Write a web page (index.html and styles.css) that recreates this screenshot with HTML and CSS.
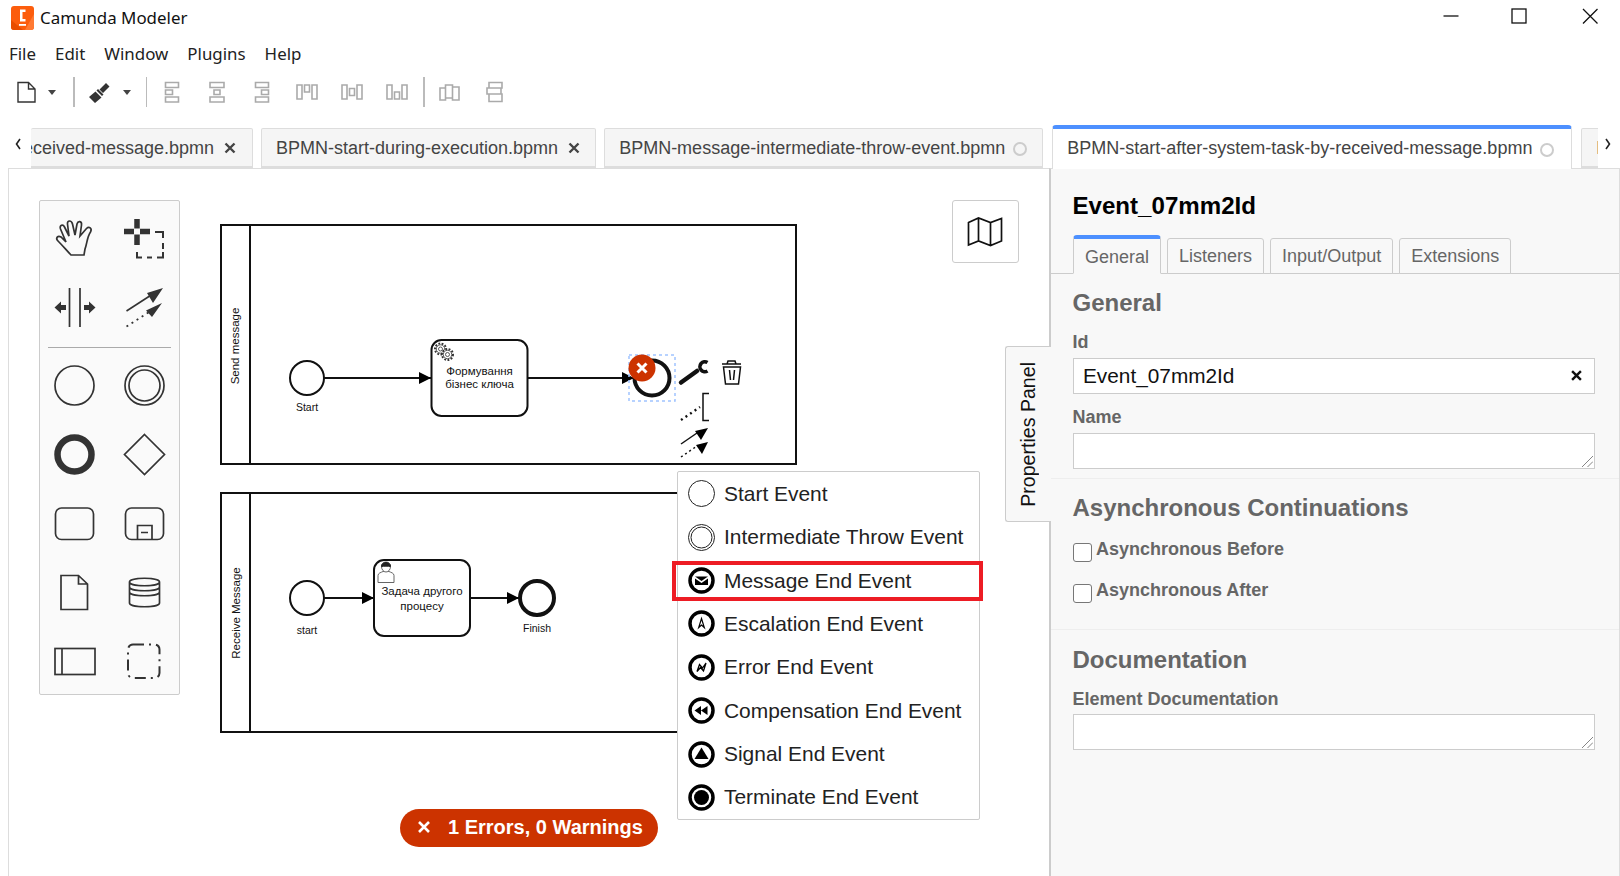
FILE: index.html
```html
<!DOCTYPE html>
<html lang="en">
<head>
<meta charset="utf-8">
<title>Camunda Modeler</title>
<link rel="stylesheet" href="styles.css">
</head>
<body>
<header class="titlebar">
  <div class="title-left">
    <svg class="logo" viewBox="0 0 23 24"><rect width="23" height="24" rx="3" fill="#fc5d0d"/><path d="M0 14 12 24H3a3 3 0 0 1-3-3z" fill="#e84d00"/><path d="M23 8 14 24h6a3 3 0 0 0 3-3z" fill="#ff7a33"/><path d="M9 3.500h5.500v2.500h-3v7h3v2.500H9z" fill="#fff"/><rect x="8" y="18" width="7" height="1.800" fill="#fff"/></svg>
    <span class="app-title">Camunda Modeler</span>
  </div>
  <div class="win-controls">
    <svg class="win-icon" viewBox="0 0 16 16"><path d="M0.500 8h15" class="win-line"/></svg>
    <svg class="win-icon" viewBox="0 0 16 16"><rect x="1" y="1" width="14" height="14" class="win-line"/></svg>
    <svg class="win-icon win-close" viewBox="0 0 16 16"><path d="M1 1l14.500 14.500M15.500 1 1 15.500" class="win-line"/></svg>
  </div>
</header>
<nav class="menubar">
  <span>File</span><span>Edit</span><span>Window</span><span>Plugins</span><span>Help</span>
</nav>
<div class="toolbar">
  <svg class="tool tool-first" viewBox="0 0 24 24"><path d="M4 2.500h10.500L21 9v13H4z M14.500 2.500V9H21" class="tool-dark"/></svg>
  <span class="caret caret-a"></span>
  <span class="sep sep-a"></span>
  <svg class="tool tool-brush" viewBox="0 0 24 24"><path d="M19 3 22.500 6.500 16 13 12.500 9.500zM11 9 16.500 14.500 15 16 9.500 10.500zM8.500 11.500 14.500 17.500 8 23 2 17z" fill="#333"/></svg>
  <span class="caret caret-b"></span>
  <span class="sep sep-b"></span>
  <svg class="tool tool-align" viewBox="0 0 24 24"><path d="M5.500 2.500h13v5h-13zM5.500 10h7v4.500h-7zM5.500 17h13v5h-13z" class="tool-off"/></svg>
  <svg class="tool tool-next" viewBox="0 0 24 24"><path d="M5 2.500h14v5H5zM9 10h6v4.500H9zM5 17h14v5H5z" class="tool-off"/></svg>
  <svg class="tool tool-next" viewBox="0 0 24 24"><path d="M5.500 2.500h13v5h-13zM11.500 10h7v4.500h-7zM5.500 17h13v5h-13z" class="tool-off"/></svg>
  <svg class="tool tool-next" viewBox="0 0 24 24"><path d="M2 5h5v14H2zM9.500 5h5v7h-5zM17 5h5v14h-5z" class="tool-off"/></svg>
  <svg class="tool tool-next" viewBox="0 0 24 24"><path d="M2 5h5v14H2zM9.500 8.500h5v7h-5zM17 5h5v14h-5z" class="tool-off"/></svg>
  <svg class="tool tool-next" viewBox="0 0 24 24"><path d="M2 5h5v14H2zM9.500 12h5v7h-5zM17 5h5v14h-5z" class="tool-off"/></svg>
  <span class="sep sep-c"></span>
  <svg class="tool tool-dist" viewBox="0 0 24 24"><path d="M2 8h5.500v12H2zM7.500 5h7v13h-7zM14.500 7H21v13h-6.500z" class="tool-off"/></svg>
  <svg class="tool tool-next" viewBox="0 0 24 24"><path d="M6 2.500h13v5.500H6zM4 8h14v6H4zM6 14h13v7.500H6z" class="tool-off"/></svg>
</div>
<div class="tabrow">
  <svg class="chev chev-l" viewBox="0 0 8 14"><path d="M6 2 2.500 7 6 12"/></svg>
  <div class="tabs">
    <div class="tab tab-clip"><span class="tab-name">BPMN-start-after-system-task-by-received-message.bpmn</span><svg class="tab-x" viewBox="0 0 12 12"><path d="M1.500 1.500l9 9M10.500 1.500l-9 9"/></svg></div>
    <div class="tab"><span class="tab-name">BPMN-start-during-execution.bpmn</span><svg class="tab-x" viewBox="0 0 12 12"><path d="M1.500 1.500l9 9M10.500 1.500l-9 9"/></svg></div>
    <div class="tab"><span class="tab-name">BPMN-message-intermediate-throw-event.bpmn</span><span class="dirty"></span></div>
    <div class="tab tab-active"><span class="tab-name">BPMN-start-after-system-task-by-received-message.bpmn</span><span class="dirty"></span></div>
    <div class="tab"><span class="tab-name">BPMN-start.bpmn</span></div>
  </div>
  <svg class="chev chev-r" viewBox="0 0 8 14"><path d="M2 2 5.500 7 2 12"/></svg>
</div>
<main class="main">
  <section class="canvas">
    <svg class="diagram" viewBox="9 169 1040 707">
      <defs>
        <marker id="arr" viewBox="0 0 12 12" refX="12" refY="6" markerWidth="12" markerHeight="12" markerUnits="userSpaceOnUse" orient="auto"><path d="M0 0 12 6 0 12z" fill="#000"/></marker>
      </defs>
      <!-- pool 1 -->
      <rect x="221" y="225" width="575" height="239" class="d-line"/>
      <path d="M250 225v239" class="d-line"/>
      <text class="d-text d-lane" transform="translate(239 346) rotate(-90)" text-anchor="middle">Send message</text>
      <circle cx="307" cy="378" r="17" class="d-line d-fill"/>
      <text class="d-text" x="307" y="411" text-anchor="middle">Start</text>
      <path d="M324 378H431" class="d-line" marker-end="url(#arr)"/>
      <rect x="431.500" y="340" width="96" height="76" rx="10" class="d-line d-fill"/>
      <g class="gear"><circle cx="440.500" cy="349" r="5.500"/><circle cx="440.500" cy="349" r="4.200"/><circle cx="440.500" cy="349" r="2"/><circle cx="447.500" cy="354.500" r="5.500"/><circle cx="447.500" cy="354.500" r="4.200"/><circle cx="447.500" cy="354.500" r="2"/></g>
      <text class="d-text d-task" x="479.500" y="375" text-anchor="middle">Формування</text>
      <text class="d-text d-task" x="479.500" y="388" text-anchor="middle">бізнес ключа</text>
      <path d="M527.500 378H634" class="d-line" marker-end="url(#arr)"/>
      <rect x="629" y="355" width="46" height="46" class="d-select"/>
      <circle cx="652" cy="378" r="17.500" class="d-end"/>
      <circle cx="642" cy="368" r="13.500" fill="#cc3300"/>
      <path d="M637.500 363.500l9 9M646.500 363.500l-9 9" class="badge-x"/>
      <path d="M681 382.500 697 371" class="wrench"/>
      <path d="M707.500 362.500a5 5 0 1 0 0 8.500" class="wrench-head"/>
      <path d="M722 364h19M727 364l1-3h7l1 3M723.500 367l2 17h13l2-17zM729.500 370l1 10M734.500 370l-1 10" class="trash"/>
      <path d="M681 420 700 407" class="d-dots"/>
      <path d="M709 393.500h-6v27h6" class="d-thin"/>
      <path d="M681 444 697 433" class="d-thin"/><path d="M708 428 695 431 701 440z" fill="#000"/>
      <path d="M681 457 697 446" class="d-dots-thin"/><path d="M708 442 696 445 702 454z" fill="#000"/>
      <!-- pool 2 -->
      <rect x="221" y="493" width="575" height="239" class="d-line"/>
      <path d="M250 493v239" class="d-line"/>
      <text class="d-text d-lane" transform="translate(239.500 613) rotate(-90)" text-anchor="middle">Receive Message</text>
      <circle cx="307" cy="598" r="17" class="d-line d-fill"/>
      <text class="d-text" x="307" y="634" text-anchor="middle">start</text>
      <path d="M324 598H374" class="d-line" marker-end="url(#arr)"/>
      <rect x="374" y="560" width="96" height="76" rx="10" class="d-line d-fill"/>
      <g class="user"><path d="M378 582.500v-7c0-2.500 3-3 5-4h6c2 1 5 1.500 5 4v7z"/><path d="M381.500 566.500a4.500 4.500 0 0 1 9 0c0 3-2 5.500-4.500 5.500s-4.500-2.500-4.500-5.500z"/><path d="M381.500 566.500c0-2.800 2-4 4.500-4s4.500 1.200 4.500 4c-2.500 -.5-6.500-.5-9 0z" class="user-hair"/></g>
      <text class="d-text d-task" x="422" y="595" text-anchor="middle">Задача другого</text>
      <text class="d-text d-task" x="422" y="609.500" text-anchor="middle">процесу</text>
      <path d="M470 598H519" class="d-line" marker-end="url(#arr)"/>
      <circle cx="537" cy="598" r="17" class="d-end"/>
      <text class="d-text" x="537" y="632" text-anchor="middle">Finish</text>
    </svg>

    <aside class="palette">
      <div class="pal-grid">
        <svg class="pal-icon" viewBox="0 0 69 69"><path d="M31 51C27 47 24 43 18 37 15 34 18 31 21 33L26 38 20.500 25C19 21 23 20 24.500 23L29 32 27.500 20C27 16 31.500 16 32.500 20L35 31 37 20C38 16.500 42 17 41.500 21L40 32 46.500 24.500C49 22 52.500 24 50.500 28 47 33 47 40 45 45L44 51Z" class="p-line"/></svg>
        <svg class="pal-icon" viewBox="0 0 69 69"><path d="M27 15v9.500M27 30.500V41M14 27.500h10M30 27.500h10" class="p-thick"/><path d="M45 28h8v6M53 39v6M53 48v5.500h-6M42 53.500h-5M32 53.500h-5V48" class="p-dash"/></svg>
        <svg class="pal-icon" viewBox="0 0 69 69"><path d="M29.500 15v39M40 15v39" class="p-line"/><path d="M14.500 34.500 21 28.500v3.500h5v5h-5v3.500zM55.500 34.500 49 28.500v3.500h-5v5h5v3.500z" fill="#333"/></svg>
        <svg class="pal-icon" viewBox="0 0 69 69"><path d="M16.500 38 42 21.500" class="p-arrow"/><path d="M16.500 53.500 40 38.500" class="p-dots"/><path d="M53 15 37 20 43 30zM52 30 36 37.500 42 44z" fill="#333"/></svg>
        <div class="pal-sep"></div>
        <svg class="pal-icon" viewBox="0 0 69 69"><circle cx="34.500" cy="34.500" r="19.500" class="p-line"/></svg>
        <svg class="pal-icon" viewBox="0 0 69 69"><circle cx="34.500" cy="34.500" r="19.500" class="p-line"/><circle cx="34.500" cy="34.500" r="15.500" class="p-line"/></svg>
        <svg class="pal-icon" viewBox="0 0 69 69"><circle cx="34.500" cy="34.500" r="17" class="p-end"/></svg>
        <svg class="pal-icon" viewBox="0 0 69 69"><path d="M34.500 14.500 54.500 34.500 34.500 54.500 14.500 34.500z" class="p-line"/></svg>
        <svg class="pal-icon" viewBox="0 0 69 69"><rect x="15.500" y="19" width="38" height="31.500" rx="6" class="p-line"/></svg>
        <svg class="pal-icon" viewBox="0 0 69 69"><rect x="15.500" y="19" width="38" height="31.500" rx="6" class="p-line"/><path d="M27.500 50.500V36.500h14.500v14M31 43.500h7" class="p-line"/></svg>
        <svg class="pal-icon" viewBox="0 0 69 69"><path d="M21 17.500h17.500L47.500 26v25.500H21zM38.500 17.500V26h9" class="p-line"/></svg>
        <svg class="pal-icon" viewBox="0 0 69 69"><path d="M19.500 24c0-5 30-5 30 0v21c0 5-30 5-30 0zM19.500 24c0 5 30 5 30 0M19.500 29c0 5 30 5 30 0M19.500 34c0 5 30 5 30 0" class="p-line"/></svg>
        <svg class="pal-icon" viewBox="0 0 69 69"><rect x="15" y="21.500" width="40" height="26" class="p-line"/><path d="M22 21.500v26" class="p-line"/></svg>
        <svg class="pal-icon" viewBox="0 0 69 69"><rect x="18" y="17.500" width="31.500" height="33.500" rx="5" class="p-group"/></svg>
      </div>
    </aside>

    <button class="minimap" type="button">
      <svg class="map-icon" viewBox="0 0 36 30"><path d="M1.500 5.500 11.500 1 23.500 5.500 34.500 1.500V24l-11 4.500L11.500 24 1.500 28zM11.500 1v23M23.500 5.500v23" /></svg>
    </button>

    <div class="prop-tab"><span>Properties Panel</span></div>

    <div class="replace-menu">
      <div class="rm-row"><svg class="rm-icon" viewBox="0 0 27 27"><circle cx="13.500" cy="13.500" r="13" class="ev-thin"/></svg><span>Start Event</span></div>
      <div class="rm-row"><svg class="rm-icon" viewBox="0 0 27 27"><circle cx="13.500" cy="13.500" r="13" class="ev-thin"/><circle cx="13.500" cy="13.500" r="10.500" class="ev-thin"/></svg><span>Intermediate Throw Event</span></div>
      <div class="rm-row rm-marked"><svg class="rm-icon" viewBox="0 0 27 27"><circle cx="13.500" cy="13.500" r="11.500" class="ev-thick"/><path d="M7 9.500h13l-6.500 4.500z" fill="#000"/><path d="M7 11.500l6.500 4.500 6.500-4.500v6.500H7z" fill="#000"/></svg><span>Message End Event</span></div>
      <div class="rm-row"><svg class="rm-icon" viewBox="0 0 27 27"><circle cx="13.500" cy="13.500" r="11.500" class="ev-thick"/><path d="M13.500 8.500 16.300 17.500 13.500 15 10.700 17.500z" fill="none" stroke="#000" stroke-width="1.200"/></svg><span>Escalation End Event</span></div>
      <div class="rm-row"><svg class="rm-icon" viewBox="0 0 27 27"><circle cx="13.500" cy="13.500" r="11.500" class="ev-thick"/><path d="M9 17.500 11.500 10.500 14.500 14 18 9 15.500 17 12.500 13.500z" fill="none" stroke="#000" stroke-width="1.300"/></svg><span>Error End Event</span></div>
      <div class="rm-row"><svg class="rm-icon" viewBox="0 0 27 27"><circle cx="13.500" cy="13.500" r="11.500" class="ev-thick"/><path d="M6.500 13.500 13 9v9zM13 13.500 19.500 9v9z" fill="#000"/></svg><span>Compensation End Event</span></div>
      <div class="rm-row"><svg class="rm-icon" viewBox="0 0 27 27"><circle cx="13.500" cy="13.500" r="11.500" class="ev-thick"/><path d="M13.500 6.500 20.500 18H6.500z" fill="#000"/></svg><span>Signal End Event</span></div>
      <div class="rm-row"><svg class="rm-icon" viewBox="0 0 27 27"><circle cx="13.500" cy="13.500" r="11.500" class="ev-thick"/><circle cx="13.500" cy="13.500" r="7.500" fill="#000"/></svg><span>Terminate End Event</span></div>
    </div>

    <div class="error-pill">
      <svg class="pill-x" viewBox="0 0 12 12"><path d="M1 1l10 10M11 1 1 11"/></svg>
      <span>1 Errors, 0 Warnings</span>
    </div>
  </section>

  <aside class="panel">
    <h1 class="panel-title">Event_07mm2Id</h1>
    <div class="sub-tabs">
      <span class="sub-tab sub-active">General</span>
      <span class="sub-tab">Listeners</span>
      <span class="sub-tab">Input/Output</span>
      <span class="sub-tab">Extensions</span>
    </div>
    <section class="group group-general">
      <h2 class="group-head">General</h2>
      <label class="field-label label-first">Id</label>
      <div class="input-wrap">
        <input class="text-input" type="text" value="Event_07mm2Id">
        <svg class="clear-x" viewBox="0 0 10 10"><path d="M1 1l8 8M9 1 1 9"/></svg>
      </div>
      <label class="field-label label-next">Name</label>
      <div class="area-wrap">
        <textarea class="text-area"></textarea>
        <svg class="grip" viewBox="0 0 12 12"><path d="M1 12 12 1M6.500 12 12 6.500"/></svg>
      </div>
    </section>
    <section class="group group-async">
      <h2 class="group-head">Asynchronous Continuations</h2>
      <label class="check-row"><input class="check" type="checkbox"><span>Asynchronous Before</span></label>
      <label class="check-row"><input class="check" type="checkbox"><span>Asynchronous After</span></label>
    </section>
    <section class="group group-doc">
      <h2 class="group-head">Documentation</h2>
      <label class="field-label label-first">Element Documentation</label>
      <div class="area-wrap area-doc">
        <textarea class="text-area"></textarea>
        <svg class="grip" viewBox="0 0 12 12"><path d="M1 12 12 1M6.500 12 12 6.500"/></svg>
      </div>
    </section>
  </aside>
</main>
</body>
</html>
```
FILE: styles.css
```css
* { box-sizing: border-box; }
html, body { margin: 0; height: 100%; }
body {
  width: 1620px;
  height: 876px;
  overflow: hidden;
  background: #fff;
  display: flex;
  flex-direction: column;
  font-family: "Liberation Sans", Arial, sans-serif;
  color: #333;
}

/* title bar */
.titlebar { height: 35px; display: flex; align-items: center; justify-content: space-between; flex: none; }
.title-left { display: flex; align-items: center; padding-left: 11px; }
.logo { width: 23px; height: 24px; display: block; }
.app-title { font-family: "Noto Sans", "Open Sans", sans-serif; font-size: 16.900px; color: #111; margin-left: 6px; }
.win-controls { display: flex; gap: 52px; padding-right: 22px; margin-top: -4px; }
.win-close { margin-left: 3px; }
.win-icon { width: 16px; height: 16px; display: block; }
.win-line { fill: none; stroke: #111; stroke-width: 1.3; }

/* menu */
.menubar { height: 37px; flex: none; display: flex; align-items: center; gap: 19px; padding-left: 9px; font-family: "Noto Sans", "Open Sans", sans-serif; font-size: 16.900px; color: #222; }

/* toolbar */
.toolbar { height: 40px; flex: none; display: flex; align-items: center; }
.tool { width: 24px; height: 24px; display: block; flex: none; }
.tool-first { margin-left: 14px; }
.tool-brush { margin-left: 12px; }
.tool-align { margin-left: 13px; }
.tool-next { margin-left: 21px; }
.tool-dist { margin-left: 13px; }
.tool-dark { fill: none; stroke: #333; stroke-width: 1.4; }
.tool-off { fill: none; stroke: #aaa; stroke-width: 1.6; }
.caret { width: 0; height: 0; border-left: 4.5px solid transparent; border-right: 4.5px solid transparent; border-top: 5px solid #444; flex: none; }
.caret-a { margin-left: 10px; }
.caret-b { margin-left: 12px; }
.sep { flex: none; width: 2px; height: 30px; background: #bbb; }
.sep-a { margin-left: 17px; }
.sep-b { margin-left: 15px; width: 1px; }
.sep-c { margin-left: 14px; }

/* file tabs */
.tabrow { height: 57px; flex: none; display: flex; position: relative; z-index: 3; }
.chev { flex: none; width: 8px; height: 14px; fill: none; stroke: #222; stroke-width: 1.6; margin-top: 25px; }
.chev-l { margin-left: 14px; margin-right: 9px; }
.chev-r { margin-left: 6px; margin-right: 8px; }
.tabs { flex: 1; min-width: 0; display: flex; align-items: flex-end; gap: 8px; overflow: hidden; }
.tab { flex: none; height: 40px; margin-bottom: 1px; display: flex; align-items: center; padding: 0 15px 0 14px; background: #f5f5f5; border: 1px solid #ddd; border-bottom-width: 2px; border-radius: 2px 2px 0 0; font-size: 18px; color: #444; white-space: nowrap; }
.tab-name { flex: none; margin-top: 1px; }
.tab-clip { width: 222px; justify-content: flex-end; overflow: hidden; border-left: none; padding: 0 16px 0 0; }
.tab-x { width: 12px; height: 12px; margin-left: 10px; flex: none; fill: none; stroke: #444; stroke-width: 2.4; }
.dirty { width: 14px; height: 14px; margin-left: 8px; margin-top: 2px; flex: none; border: 2px solid #ccc; border-radius: 50%; }
.tab-active { height: 44px; margin: 0 1px 0 1px; background: #fff; border-top: 4px solid #4d90ff; border-bottom: none; border-left: 1px solid #ddd; border-right: 1px solid #ddd; width: 520px; border-radius: 4px 4px 0 0; }
.tab-active .tab-name { margin-top: -1px; }

/* main */
.main { height: 708px; margin-top: -1px; flex: none; display: flex; padding-left: 8px; }
.canvas { position: relative; width: 1041px; flex: none; border-left: 1px solid #ddd; border-top: 1px solid #ddd; background: #fff; }
.diagram { position: absolute; left: 0; top: 0; width: 1040px; height: 707px; display: block; }
.d-line { fill: none; stroke: #111; stroke-width: 2; }
.d-fill { fill: #fff; }
.d-end { fill: #fff; stroke: #111; stroke-width: 4; }
.d-text { font-family: "Liberation Sans", Arial, sans-serif; font-size: 10.5px; fill: #111; }
.d-task { font-size: 11.500px; }
.d-lane { font-size: 11.500px; }
.d-select { fill: none; stroke: #a0c4ff; stroke-width: 1.5; stroke-dasharray: 3 3; }
.badge-x { stroke: #fff; stroke-width: 3; fill: none; }
.wrench { stroke: #111; stroke-width: 4.5; fill: none; stroke-linecap: round; }
.wrench-head { stroke: #111; stroke-width: 3.5; fill: none; }
.trash { stroke: #111; stroke-width: 1.5; fill: none; }
.d-dots { stroke: #111; stroke-width: 2.4; stroke-dasharray: 2 3.500; fill: none; }
.d-dots-thin { stroke: #111; stroke-width: 1.5; stroke-dasharray: 2 3; fill: none; }
.d-thin { stroke: #111; stroke-width: 1.5; fill: none; }
.gear circle { fill: #fff; stroke: #333; stroke-width: 0.8; }
.gear circle:nth-child(3n+1) { stroke-width: 2; stroke-dasharray: 1.800 1.500; }
.user path { fill: #fff; stroke: #666; stroke-width: 1; }
.user .user-hair { fill: #222; stroke: #222; }

/* palette */
.palette { position: absolute; left: 30px; top: 31px; width: 141px; height: 495px; padding-top: 3px; background: #fafafa; border: 1px solid #ccc; border-radius: 2px; }
.pal-grid { display: grid; grid-template-columns: 69px 69px; grid-template-rows: 69px 69px 9px; grid-auto-rows: 69px; column-gap: 1px; }
.pal-icon { width: 69px; height: 69px; display: block; }
.pal-sep { grid-column: 1 / -1; height: 1px; margin: 5px 8px 3px; background: #aaa; align-self: start; }
.p-line { fill: none; stroke: #333; stroke-width: 1.7; }
.p-end { fill: none; stroke: #333; stroke-width: 6.5; }
.p-thick { fill: none; stroke: #333; stroke-width: 5.500; }
.p-dash { fill: none; stroke: #333; stroke-width: 2; }
.p-arrow { fill: none; stroke: #333; stroke-width: 1.6; }
.p-dots { fill: none; stroke: #333; stroke-width: 1.8; stroke-dasharray: 2 4; }
.p-group { fill: none; stroke: #333; stroke-width: 2; stroke-dasharray: 11 5 2 5; }

/* minimap */
.minimap { position: absolute; left: 942.500px; top: 31px; width: 67px; height: 63px; padding: 0; display: flex; align-items: center; justify-content: center; background: #fff; border: 1px solid #ccc; border-radius: 3px; }
.map-icon { width: 36px; height: 30px; display: block; fill: none; stroke: #111; stroke-width: 1.7; }

/* properties toggle */
.prop-tab { position: absolute; left: 996px; top: 177px; width: 46px; height: 176px; display: flex; align-items: center; justify-content: center; background: #f8f8f8; border: 1px solid #ccc; border-right: none; border-radius: 3px 0 0 3px; z-index: 2; }
.prop-tab span { writing-mode: vertical-rl; transform: rotate(180deg); font-size: 19.600px; color: #111; white-space: nowrap; }

/* replace menu */
.replace-menu { position: absolute; left: 668px; top: 302px; width: 303px; padding: 0; background: #fff; border: 1px solid #ccc; border-radius: 2px; z-index: 2; }
.rm-row { position: relative; height: 43.4px; display: flex; align-items: center; gap: 9.500px; padding-left: 9.500px; font-size: 20.950px; color: #222; white-space: nowrap; }
.rm-icon { width: 27px; height: 27px; flex: none; display: block; }
.rm-marked { padding-top: 1px; }
.rm-marked::after { content: ""; position: absolute; left: -6px; right: -3.500px; top: 2px; bottom: 1px; border: 4px solid #ed1c24; }
.ev-thin { fill: none; stroke: #222; stroke-width: 1; }
.ev-thick { fill: none; stroke: #000; stroke-width: 3.5; }

/* error pill */
.error-pill { position: absolute; left: 391px; top: 640px; width: 258px; height: 38px; padding: 0 0 2px 18px; display: flex; align-items: center; gap: 18px; background: #cc3300; border-radius: 19px; color: #fff; font-size: 20px; font-weight: 700; white-space: nowrap; z-index: 2; }
.pill-x { width: 12px; height: 12px; flex: none; fill: none; stroke: #fff; stroke-width: 2.6; }

/* properties panel */
.panel { width: 571px; flex: none; background: #f8f8f8; border-left: 2px solid #ccc; border-top: 1px solid #ddd; border-right: 1px solid #ddd; }
.panel-title { margin: 23px 0 0 21.500px; font-size: 24.100px; line-height: 28px; font-weight: 700; color: #000; }
.sub-tabs { margin-top: 15px; height: 39px; padding-left: 22px; display: flex; align-items: flex-end; gap: 6px; border-bottom: 1px solid #ccc; }
.sub-tab { height: 36px; margin-bottom: -1px; padding: 0 11px; display: flex; align-items: center; background: #f8f8f8; border: 1px solid #ccc; border-radius: 3px 3px 0 0; font-size: 18px; color: #666; }
.sub-active { height: 39px; padding-top: 3px; border-top: 4px solid #4d90ff; border-bottom-color: #f8f8f8; border-radius: 4px 4px 0 0; }
.group { padding: 17px 24px 0 21.500px; }
.group-general { padding-bottom: 9px; border-bottom: 1px solid #eee; }
.group-async { padding-bottom: 26px; border-bottom: 1px solid #eee; }
.group-doc { padding-top: 18px; }
.group-head { margin: 0; font-size: 24px; line-height: 24px; font-weight: 700; color: #666; }
.field-label { display: block; font-size: 18px; line-height: 20px; font-weight: 700; color: #666; }
.label-first { margin-top: 17px; }
.label-next { margin-top: 13px; }
.input-wrap { position: relative; margin-top: 6px; }
.text-input { width: 100%; height: 36px; display: block; padding: 0 9.500px; background: #fff; border: 1px solid #ccc; border-radius: 0; font-family: "Liberation Sans", Arial, sans-serif; font-size: 20.800px; color: #111; outline: none; }
.clear-x { position: absolute; right: 13px; top: 12px; width: 11px; height: 11px; fill: none; stroke: #111; stroke-width: 2.2; }
.area-wrap { position: relative; margin-top: 6px; }
.area-doc { margin-top: 5px; }
.text-area { width: 100%; height: 36px; display: block; background: #fff; border: 1px solid #ccc; border-radius: 0; outline: none; resize: none; }
.grip { position: absolute; right: 2px; bottom: 2px; width: 12px; height: 12px; fill: none; stroke: #666; stroke-width: 0.8; }
.check-row { display: flex; align-items: flex-start; height: 23px; margin-top: 18.500px; font-size: 18px; line-height: 20px; font-weight: 700; color: #666; }
.check { appearance: none; width: 19px; height: 19px; margin: 4px 4.500px 0 0; flex: none; background: #fff; border: 1px solid #777; border-radius: 3px; }
```
